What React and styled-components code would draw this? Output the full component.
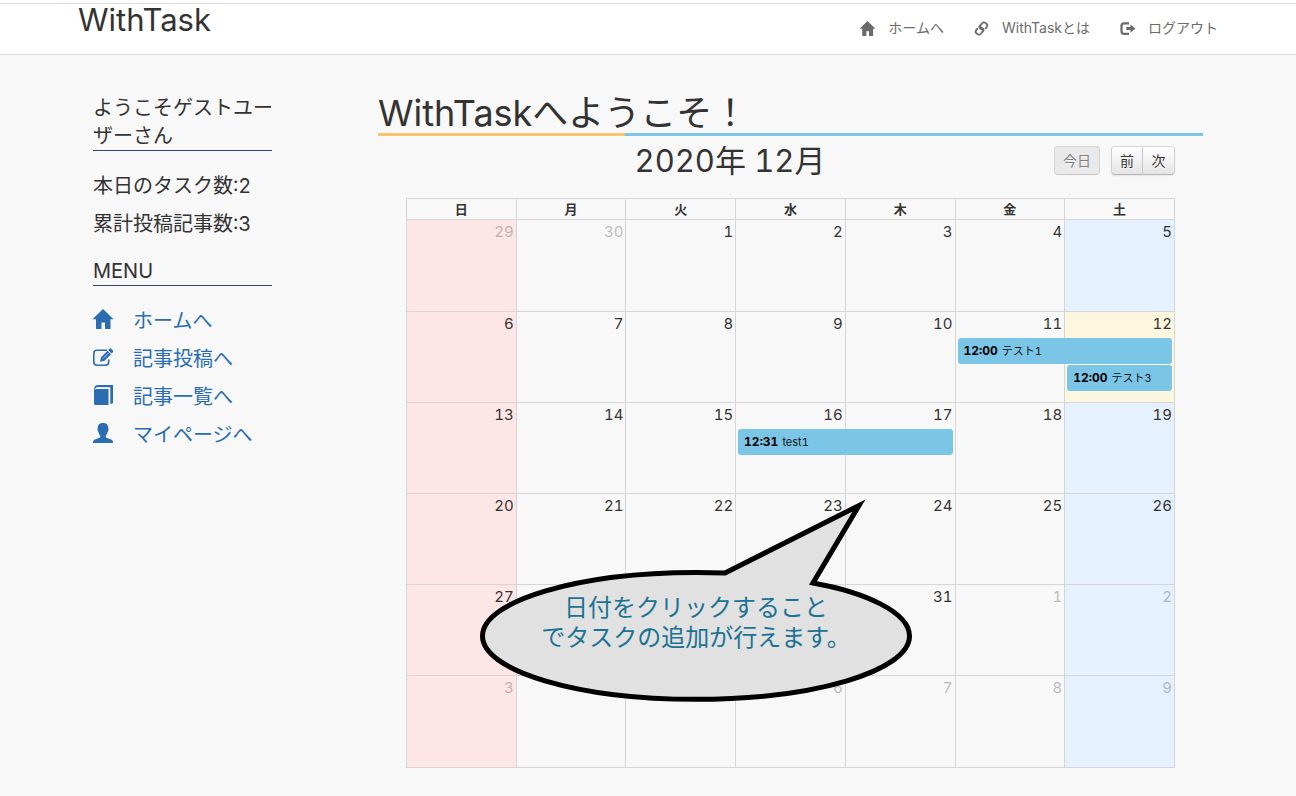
import React from "react";
import styled, { createGlobalStyle } from "styled-components";

const GlobalStyle = createGlobalStyle`
  *, *::before, *::after { box-sizing: border-box; }
  body {
    margin: 0;
    background: #f8f8f8;
    color: #333;
    font-family: Inter, "Noto Sans CJK JP", sans-serif;
    font-size: 14px;
    line-height: 20px;
    font-variant-numeric: tabular-nums;
  }
  h1, h2, h3, p, ul { margin: 0; padding: 0; font-weight: 400; }
  ul { list-style: none; }
  a { text-decoration: none; }
`;

const Navbar = styled.header`
  margin-top: 3px;
  border: solid #ddd;
  border-width: 1px 0;
  background: #fff;
  box-shadow: 0 -3px 0 #fff;
`;

const Container = styled.div`
  width: 100%;
  max-width: 1170px;
  margin: 0 auto;
  padding: 0 15px;
`;

const NavInner = styled(Container)`
  display: flex;
  justify-content: space-between;
  min-height: 50px;
`;

const Brand = styled.a`
  color: #333;
  font-size: 31px;
  line-height: 32px;
`;

const NavLinks = styled.ul`
  display: flex;
  gap: 30px;
  padding-top: 14px;
`;

const NavLink = styled.a`
  display: flex;
  align-items: center;
  gap: 13px;
  color: #6b6b6b;
  white-space: nowrap;
`;

const Glyph = styled.svg`
  display: block;
  flex: none;
  width: ${(p) => p.$size}px;
  height: ${(p) => p.$size}px;
  fill: currentColor;
`;

const Columns = styled(Container)`
  display: flex;
`;

const Sidebar = styled.aside`
  flex: 0 0 25%;
  min-width: 0;
  padding: 39px 91px 0 15px;
  font-size: 20px;
  line-height: 28px;
`;

const SideHeading = styled.h2`
  border-bottom: 1px solid #33436b;
  font-size: 20px;
  line-height: 28px;
  white-space: nowrap;
`;

const Stats = styled.div`
  display: grid;
  gap: 10px;
  padding: 21px 0 19px;
`;

const SideMenu = styled.ul`
  display: grid;
  gap: 10px;
  padding-top: 21px;
`;

const MenuLink = styled.a`
  display: flex;
  align-items: center;
  gap: 20px;
  color: #2a6db0;
  white-space: nowrap;

  ${Glyph} { margin-bottom: 4px; }
`;

const Main = styled.main`
  flex: 1;
  min-width: 0;
  padding: 39px 15px 28px;
`;

const PageTitle = styled.h1`
  padding-bottom: 3px;
  font-size: 36px;
  line-height: 39px;
  background: linear-gradient(90deg, #fdc26b 30%, #7bc6e7 30%) bottom / 100% 3px no-repeat;
`;

const Calendar = styled.section`
  position: relative;
  padding: 10px 28px 0;
`;

const Toolbar = styled.div`
  display: flex;
  align-items: flex-start;
  margin-bottom: 22px;
`;

const MonthTitle = styled.h2`
  flex: 1;
  font-size: 31px;
  line-height: 30px;
  text-align: center;
`;

const Controls = styled.div`
  display: flex;
  gap: 11px;
`;

const ButtonGroup = styled.div`
  display: flex;
`;

const ToolButton = styled.button`
  min-width: 32px;
  height: 29px;
  padding: 0 8px;
  border: 1px solid;
  border-color: #d9d9d9 #d0d0d0 #b5b5b5;
  border-radius: 4px;
  background: linear-gradient(#fff, #e4e4e4);
  box-shadow: 0 1px 2px rgba(0, 0, 0, 0.08);
  color: #333;
  font: inherit;
  line-height: 18px;
  text-shadow: 0 1px 1px rgba(255, 255, 255, 0.75);

  &:disabled {
    border-color: #d5d5d5 #d5d5d5 #c5c5c5;
    background: #e9e9e9;
    box-shadow: none;
    color: #808080;
  }
  ${ButtonGroup} &:first-child { border-radius: 4px 0 0 4px; }
  ${ButtonGroup} &:last-child { border-left: 0; border-radius: 0 4px 4px 0; }
`;

const MonthTable = styled.table`
  width: 100%;
  border-collapse: collapse;
  table-layout: fixed;

  tbody tr { height: 91px; }
  tbody tr:first-child, tbody tr:last-child { height: 92px; }
`;

const DayName = styled.th`
  height: 21px;
  padding: 0;
  border: 1px solid #d6d6d6;
  font-size: 13px;
  line-height: 20px;
`;

const fills = { sun: "#ffe6e6", sat: "#e5f1fe", today: "#fcf7de" };

const DayCell = styled.td`
  padding: 2px 2px 0;
  border: 1px solid #d6d6d6;
  background: ${(p) => fills[p.$kind] || "transparent"};
  vertical-align: top;
`;

const DayNumber = styled.div`
  padding-bottom: 4px;
  color: #333;
  font-size: 15px;
  line-height: 20px;
  text-align: right;
  opacity: ${(p) => (p.$other ? 0.3 : 1)};
  visibility: ${(p) => (p.$covered ? "hidden" : "visible")};
`;

const EventLink = styled.a`
  position: relative;
  z-index: 1;
  display: block;
  width: calc(${(p) => p.$span} * 100% + ${(p) => (p.$span - 1) * 5}px);
  height: 26px;
  margin-top: ${(p) => p.$lane * 27}px;
  padding: 0 6px;
  border-radius: 3px;
  background: #7bc6e7;
  color: #111;
  font-size: 11px;
  line-height: 26px;
  white-space: nowrap;
`;

const EventTime = styled.time`
  margin-right: 4px;
  color: #000;
  font-size: 12px;
  font-weight: 700;
`;

const Bubble = styled.div`
  position: absolute;
  z-index: 2;
  top: 362px;
  left: 102px;
  width: 432px;
  height: 204px;
`;

const BubbleShape = styled.svg`
  position: absolute;
  inset: 0;
  overflow: visible;
`;

const BubbleText = styled.p`
  position: relative;
  padding-top: 95px;
  color: #1b7394;
  font-size: 24px;
  line-height: 30px;
  text-align: center;
`;

const shapes = {
  home: <path d="M10 0 20.500 10.300H17.500V20H12V13.500H8.500V20H3V10.300H-.5Z" />,
  edit: (
    <>
      <path
        d="M14 3.200H4Q.8 3.200.8 6.400V15Q.8 18.200 4 18.200H12.500Q15.700 18.200 15.700 15V12.500"
        fill="none"
        stroke="currentColor"
        strokeWidth="1.600"
      />
      <path d="M7 14.800 8 10.300 14.500 3.800 18 7.300 11.500 13.800ZM15.200 3.100 16.700 1.600Q17.500 1 18.300 1.700L20 3.400Q20.600 4.200 20 5L18.600 6.500Z" />
      <path d="M10 11.500 15.500 6" stroke="#f8f8f8" strokeWidth=".7" />
    </>
  ),
  book: (
    <>
      <path d="M1 4.500 4 4H15.500V20H2.500Q1 20 1 18.500Z" />
      <path d="M1 4.500Q1 0 5 0H20V18.200L17.300 19V2.200H5Q3 2.200 2.300 3.500Z" />
      <path d="M3.500 2.800H16.500V19" fill="none" stroke="#f8f8f8" strokeWidth=".7" />
    </>
  ),
  user: (
    <path d="M10 0C13.800 0 15.300 2.200 15.300 5.500C15.900 6.200 15.500 7.900 14.800 8.400C14.400 10.300 13.500 11.800 12.800 12.700V14.200C14 15.500 18.500 16 19.500 17.500Q20 18.300 20 20H0Q0 18.300.5 17.500C1.500 16 6 15.500 7.200 14.200V12.700C6.500 11.800 5.600 10.300 5.200 8.400C4.500 7.900 4.100 6.200 4.700 5.500C4.700 2.200 6.200 0 10 0Z" />
  ),
  link: (
    <g fill="none" stroke="currentColor" strokeWidth="2.400" strokeLinecap="round">
      <path d="M12.800 12.800 8.800 10.200Q6.600 8.700 8 6.500L10.900 3Q12.800.9 15 2.400L16.600 3.600Q18.700 5.300 17.300 7.500L15.500 9.800" />
      <path d="M7.200 7.200 11.200 9.800Q13.400 11.300 12 13.500L9.100 17Q7.200 19.100 5 17.600L3.400 16.400Q1.300 14.700 2.700 12.500L4.500 10.200" />
    </g>
  ),
  logout: (
    <>
      <path
        d="M12 3H5.500Q2 3 2 6.500V13.500Q2 17 5.500 17H12"
        fill="none"
        stroke="currentColor"
        strokeWidth="3"
      />
      <path d="M8.500 8H14V4.500L20.500 10 14 15.500V12H8.500Z" />
    </>
  ),
};

function Icon({ name, size }) {
  return (
    <Glyph viewBox="0 0 20 20" $size={size} overflow="visible" aria-hidden="true">
      {shapes[name]}
    </Glyph>
  );
}

const navItems = [
  ["home", "ホームへ"],
  ["link", "WithTaskとは"],
  ["logout", "ログアウト"],
];

const menuItems = [
  ["home", "ホームへ"],
  ["edit", "記事投稿へ"],
  ["book", "記事一覧へ"],
  ["user", "マイページへ"],
];

const dayNames = ["日", "月", "火", "水", "木", "金", "土"];

const events = {
  "2020-12-11": { time: "12:00", title: "テスト1", span: 2, lane: 0 },
  "2020-12-12": { time: "12:00", title: "テスト3", span: 1, lane: 1 },
  "2020-12-16": { time: "12:31", title: "test1", span: 2, lane: 0 },
};

const today = "2020-12-12";

// Days that lie fully behind the hint bubble.
const coveredDays = ["2020-12-28", "2020-12-29", "2020-12-30"];

const weeks = Array.from({ length: 6 }, (_, week) =>
  Array.from({ length: 7 }, (_, day) => {
    const date = new Date(Date.UTC(2020, 10, 29 + week * 7 + day));
    const key = date.toISOString().slice(0, 10);
    let kind = day === 0 ? "sun" : day === 6 ? "sat" : "weekday";
    if (key === today) kind = "today";
    return { key, kind, number: date.getUTCDate(), other: date.getUTCMonth() !== 11 };
  })
);

function Day({ day }) {
  const event = events[day.key];
  return (
    <DayCell $kind={day.kind}>
      <DayNumber $other={day.other} $covered={coveredDays.includes(day.key)}>
        {day.number}
      </DayNumber>
      {event && (
        <EventLink href="#" $span={event.span} $lane={event.lane}>
          <EventTime>{event.time}</EventTime>
          {event.title}
        </EventLink>
      )}
    </DayCell>
  );
}

export default function App() {
  return (
    <>
      <GlobalStyle />
      <Navbar>
        <NavInner>
          <Brand href="#">WithTask</Brand>
          <nav>
            <NavLinks>
              {navItems.map(([icon, label]) => (
                <li key={label}>
                  <NavLink href="#">
                    <Icon name={icon} size={15} />
                    {label}
                  </NavLink>
                </li>
              ))}
            </NavLinks>
          </nav>
        </NavInner>
      </Navbar>
      <Columns>
        <Sidebar>
          <SideHeading>
            ようこそゲストユー
            <br />
            ザーさん
          </SideHeading>
          <Stats>
            <p>本日のタスク数:2</p>
            <p>累計投稿記事数:3</p>
          </Stats>
          <SideHeading>MENU</SideHeading>
          <SideMenu>
            {menuItems.map(([icon, label]) => (
              <li key={label}>
                <MenuLink href="#">
                  <Icon name={icon} size={20} />
                  {label}
                </MenuLink>
              </li>
            ))}
          </SideMenu>
        </Sidebar>
        <Main>
          <PageTitle>WithTaskへようこそ！</PageTitle>
          <Calendar>
            <Toolbar>
              <MonthTitle>2020年 12月</MonthTitle>
              <Controls>
                <ToolButton type="button" disabled>今日</ToolButton>
                <ButtonGroup>
                  <ToolButton type="button">前</ToolButton>
                  <ToolButton type="button">次</ToolButton>
                </ButtonGroup>
              </Controls>
            </Toolbar>
            <MonthTable>
              <thead>
                <tr>
                  {dayNames.map((name) => (
                    <DayName key={name} scope="col">{name}</DayName>
                  ))}
                </tr>
              </thead>
              <tbody>
                {weeks.map((week) => (
                  <tr key={week[0].key}>
                    {week.map((day) => (
                      <Day key={day.key} day={day} />
                    ))}
                  </tr>
                ))}
              </tbody>
            </MonthTable>
            <Bubble>
              <BubbleShape width="432" height="204" viewBox="0 0 432 204" aria-hidden="true">
                <path
                  d="M245 75 379 7.500 333 85C384 94 429.500 114 429.500 138C429.500 173 334 201.300 216 201.300S2.500 173 2.500 138 98 74.500 216 74.500Q231 74.500 245 75Z"
                  fill="#e1e1e1"
                  stroke="#000"
                  strokeWidth="5"
                  strokeMiterlimit="10"
                />
              </BubbleShape>
              <BubbleText>
                日付をクリックすること
                <br />
                でタスクの追加が行えます。
              </BubbleText>
            </Bubble>
          </Calendar>
        </Main>
      </Columns>
    </>
  );
}
